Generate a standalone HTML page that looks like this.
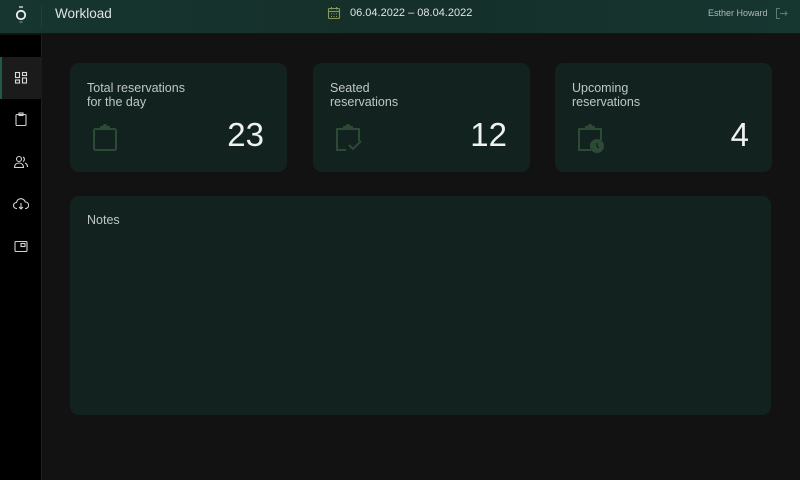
<!DOCTYPE html>
<html><head><style>
*{margin:0;padding:0;box-sizing:border-box}
body{width:800px;height:480px;background:#121212;font-family:"Liberation Sans",sans-serif;position:relative;overflow:hidden;color:#d8dedb}
.hdr{position:absolute;left:0;top:0;width:800px;height:34px;background:linear-gradient(90deg,#173630,#152f2a 50%,#163630);border-bottom:1px solid #0c1a17}
.side{position:absolute;left:0;top:35px;width:42px;height:445px;background:#000;border-right:1px solid #1e1e1e}
.act{position:absolute;left:0;top:22px;width:42px;height:42px;background:#1b1b1b;border-left:2px solid #1f5a4c}
.card{position:absolute;top:63px;width:217px;height:109px;background:#12231f;border-radius:9px}
.lbl{position:absolute;left:17px;top:18px;font-size:12.5px;line-height:14px;color:#bfc7c3}
.num{position:absolute;right:23px;top:53px;font-size:33px;color:#eef1f0}
.ic{position:absolute;left:22px;top:60px}
</style></head><body>
<div class="hdr">
 <svg style="position:absolute;left:14px;top:5px" width="14" height="20" viewBox="0 0 14 20"><line x1="5" y1="2" x2="9" y2="2" stroke="#ddd" stroke-width="1.4"/><circle cx="7" cy="10" r="4.2" fill="none" stroke="#eee" stroke-width="1.8"/><line x1="5.5" y1="17" x2="8.5" y2="17" stroke="#999" stroke-width="1"/></svg>
 <div style="position:absolute;left:41px;top:6px;width:1px;height:22px;background:#20403a"></div>
 <div style="position:absolute;left:55px;top:6px;font-size:13.5px;color:#dfe4e2">Workload</div>
 <svg style="position:absolute;left:327px;top:6px" width="14" height="14" viewBox="0 0 14 14" fill="none" stroke="#8a9a55" stroke-width="1.1"><rect x="1.5" y="2.5" width="11" height="10" rx="1"/><line x1="1.5" y1="5.5" x2="12.5" y2="5.5"/><line x1="4.5" y1="1" x2="4.5" y2="3.5"/><line x1="9.5" y1="1" x2="9.5" y2="3.5"/><path d="M4 8h1M6.5 8h1M9 8h1M4 10.5h1M6.5 10.5h1M9 10.5h1"/></svg>
 <div style="position:absolute;left:350px;top:7px;font-size:11px;color:#dfe4e2">06.04.2022 – 08.04.2022</div>
 <div style="position:absolute;left:708px;top:8px;font-size:9px;color:#aeb9b5">Esther Howard</div>
 <svg style="position:absolute;left:775px;top:7px" width="13" height="13" viewBox="0 0 13 13" fill="none" stroke="#5f7a70" stroke-width="1"><path d="M5 1.5H1.5v10H5M5 6.5h7M10 4.5l2 2-2 2"/></svg>
</div>
<div class="side">
 <div class="act"></div>
 <svg style="position:absolute;left:14px;top:36px" width="14" height="14" viewBox="0 0 14 14" fill="none" stroke="#d8dcda" stroke-width="1.1"><rect x="1.5" y="1.5" width="4" height="5"/><rect x="8.5" y="1.5" width="4" height="3"/><rect x="1.5" y="9" width="4" height="3"/><rect x="8.5" y="7" width="4" height="5"/></svg>
 <svg style="position:absolute;left:14px;top:77px" width="14" height="15" viewBox="0 0 14 15" fill="none" stroke="#cfd3d1" stroke-width="1.1"><rect x="2" y="2.5" width="10" height="11" rx="1"/><rect x="5" y="1" width="4" height="2.5"/></svg>
 <svg style="position:absolute;left:13px;top:120px" width="16" height="14" viewBox="0 0 16 14" fill="none" stroke="#cfd3d1" stroke-width="1.1"><circle cx="6" cy="4" r="2.5"/><path d="M1.5 12.5c0-3 2-4.5 4.5-4.5s4.5 1.5 4.5 4.5z"/><path d="M10 2a2.5 2.5 0 010 4.5M12 8c1.5.7 2.5 2 2.5 4"/></svg>
 <svg style="position:absolute;left:13px;top:162px" width="16" height="14" viewBox="0 0 16 14" fill="none" stroke="#cfd3d1" stroke-width="1.1"><path d="M4 11.5H3.5a3 3 0 010-6 4.5 4.5 0 018.8-.5 3 3 0 01.2 6.5H12"/><path d="M8 6v6M6 10l2 2 2-2"/></svg>
 <svg style="position:absolute;left:14px;top:205px" width="14" height="13" viewBox="0 0 14 13" fill="none" stroke="#cfd3d1" stroke-width="1.1"><rect x="1" y="1.5" width="12" height="10" rx="1"/><rect x="7" y="3.5" width="4" height="3"/></svg>
</div>

<div class="card" style="left:70px"><div class="lbl">Total reservations<br>for the day</div>
<svg class="ic" width="26" height="30" viewBox="0 0 26 30" fill="none" stroke="#2c4a36" stroke-width="2"><rect x="2" y="6" width="22" height="21" rx="1.5"/><path d="M9 6V4h8v2"/><circle cx="13" cy="3.5" r="1.5" fill="#2c4a36"/></svg>
<div class="num">23</div></div>
<div class="card" style="left:313px"><div class="lbl">Seated<br>reservations</div>
<svg class="ic" width="28" height="30" viewBox="0 0 28 30" fill="none" stroke="#2c4a36" stroke-width="2"><path d="M11 27H2V6h22v12"/><path d="M9 6V4h8v2"/><circle cx="13" cy="3.5" r="1.5" fill="#2c4a36"/><path d="M14 22l4 4 8-8"/></svg>
<div class="num">12</div></div>
<div class="card" style="left:555px"><div class="lbl">Upcoming<br>reservations</div>
<svg class="ic" width="28" height="32" viewBox="0 0 28 32" fill="none" stroke="#2c4a36" stroke-width="2"><path d="M14 27H2V6h22v11"/><path d="M9 6V4h8v2"/><circle cx="13" cy="3.5" r="1.5" fill="#2c4a36"/><circle cx="20" cy="23" r="6" fill="#2c4a36"/><path d="M20 20v3.5l2 1.5" stroke="#12231f" stroke-width="1.3"/></svg>
<div class="num">4</div></div>

<div style="position:absolute;left:70px;top:196px;width:701px;height:219px;background:#12231f;border-radius:9px"><div style="position:absolute;left:17px;top:17px;font-size:12.5px;color:#bfc7c3">Notes</div></div>
</body></html>
